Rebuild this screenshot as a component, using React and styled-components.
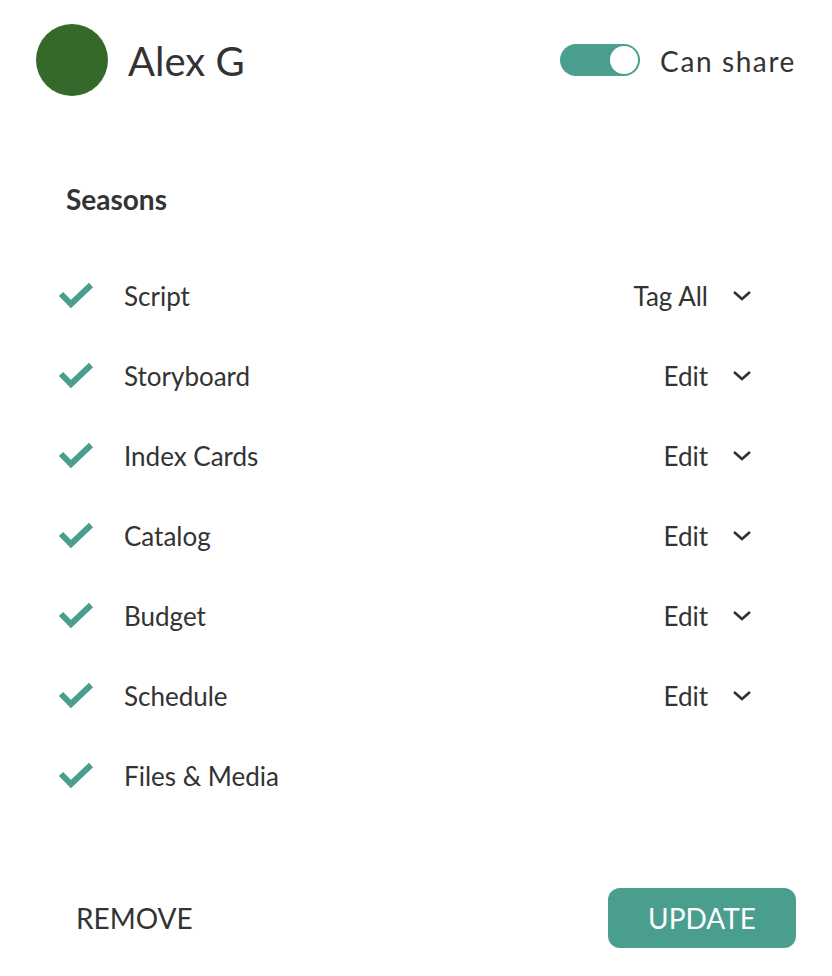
import React from "react";
import styled, { createGlobalStyle } from "styled-components";

const GlobalStyle = createGlobalStyle`
  body {
    margin: 0;
    background: #fff;
    font-family: Lato, "Open Sans", sans-serif;
    color: #333;
  }
`;

const items = [
  { label: "Script", action: "Tag All" },
  { label: "Storyboard", action: "Edit" },
  { label: "Index Cards", action: "Edit" },
  { label: "Catalog", action: "Edit" },
  { label: "Budget", action: "Edit" },
  { label: "Schedule", action: "Edit" },
  { label: "Files & Media" },
];

const Check = () => (
  <svg width="36" height="28" viewBox="0 0 36 28">
    <path
      d="M3 12 L13 22 L33 3"
      fill="none"
      stroke="#4a9e8e"
      strokeWidth="6"
    />
  </svg>
);

const Chevron = () => (
  <svg width="20" height="14" viewBox="0 0 20 14">
    <path
      d="M2 3 L10 10 L18 3"
      fill="none"
      stroke="#333"
      strokeWidth="2.6"
    />
  </svg>
);

const App = () => {
  return (
    <Panel>
      <GlobalStyle />
      <Header>
        <User>
          <Avatar />
          <Name>Alex G</Name>
        </User>
        <Share>
          <Toggle $on>
            <Knob />
          </Toggle>
          <ShareLabel>Can share</ShareLabel>
        </Share>
      </Header>

      <SectionTitle>Seasons</SectionTitle>

      <List>
        {items.map((it) => (
          <Row key={it.label}>
            <CheckBox>
              <Check />
            </CheckBox>
            <Label>{it.label}</Label>
            {it.action && (
              <Action>
                <span>{it.action}</span>
                <Chevron />
              </Action>
            )}
          </Row>
        ))}
      </List>

      <Footer>
        <TextButton>REMOVE</TextButton>
        <PrimaryButton>UPDATE</PrimaryButton>
      </Footer>
    </Panel>
  );
};

export default App;

const Panel = styled.div`
  width: 832px;
  height: 976px;
  box-sizing: border-box;
  padding: 24px 36px 0 36px;
  display: flex;
  flex-direction: column;
`;

const Header = styled.div`
  display: flex;
  align-items: center;
  justify-content: space-between;
  height: 72px;
`;

const User = styled.div`
  display: flex;
  align-items: center;
  gap: 20px;
`;

const Avatar = styled.div`
  width: 72px;
  height: 72px;
  border-radius: 50%;
  background: #35692a;
`;

const Name = styled.div`
  font-size: 40px;
  color: #333;
  margin-top: 2px;
`;

const Share = styled.div`
  display: flex;
  align-items: center;
  gap: 20px;
`;

const Toggle = styled.div`
  width: 80px;
  height: 32px;
  border-radius: 16px;
  background: ${(p) => (p.$on ? "#4a9e8e" : "#ccc")};
  display: flex;
  align-items: center;
  justify-content: ${(p) => (p.$on ? "flex-end" : "flex-start")};
  padding: 0 2px;
  box-sizing: border-box;
`;

const Knob = styled.div`
  width: 28px;
  height: 28px;
  border-radius: 50%;
  background: #fff;
`;

const ShareLabel = styled.div`
  font-size: 28px;
  letter-spacing: 1.6px;
  color: #333;
  margin-top: 2px;
`;

const SectionTitle = styled.div`
  margin-top: 86px;
  padding-left: 30px;
  font-size: 28px;
  font-weight: 700;
  color: #333;
`;

const List = styled.div`
  margin-top: 40px;
  display: flex;
  flex-direction: column;
`;

const Row = styled.div`
  display: flex;
  align-items: center;
  height: 80px;
  padding-left: 22px;
  padding-right: 44px;
`;

const CheckBox = styled.div`
  width: 36px;
  height: 28px;
  display: flex;
  margin-right: 30px;
`;

const Label = styled.div`
  flex: 1;
  font-size: 26px;
  color: #333;
`;

const Action = styled.div`
  display: flex;
  align-items: center;
  gap: 24px;
  font-size: 26px;
  color: #333;
`;

const Footer = styled.div`
  margin-top: 72px;
  display: flex;
  align-items: center;
  justify-content: space-between;
  padding-left: 40px;
`;

const TextButton = styled.button`
  background: none;
  border: none;
  padding: 0;
  font-family: Lato, sans-serif;
  font-size: 28px;
  color: #333;
`;

const PrimaryButton = styled.button`
  width: 188px;
  height: 60px;
  border: none;
  border-radius: 12px;
  background: #4a9e8e;
  color: #fff;
  font-family: Lato, sans-serif;
  font-size: 28px;
`;
